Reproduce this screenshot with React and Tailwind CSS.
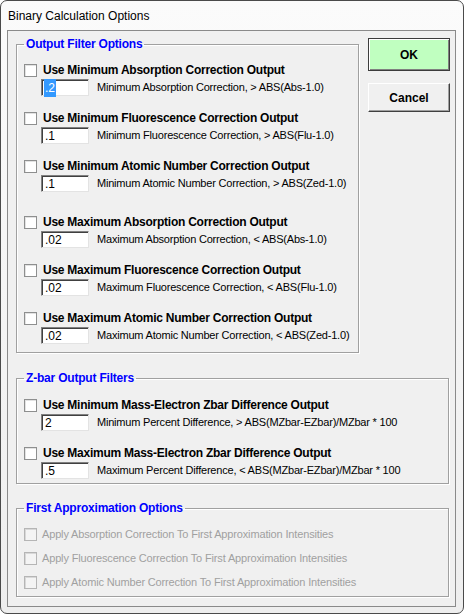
import React from "react";

const filters = [
  { label: "Use Minimum Absorption Correction Output", value: ".2", desc: "Minimum Absorption Correction, > ABS(Abs-1.0)", selected: true },
  { label: "Use Minimum Fluorescence Correction Output", value: ".1", desc: "Minimum Fluorescence Correction, > ABS(Flu-1.0)" },
  { label: "Use Minimum Atomic Number Correction Output", value: ".1", desc: "Minimum Atomic Number Correction, > ABS(Zed-1.0)" },
  { label: "Use Maximum Absorption Correction Output", value: ".02", desc: "Maximum Absorption Correction, < ABS(Abs-1.0)", gap: true },
  { label: "Use Maximum Fluorescence Correction Output", value: ".02", desc: "Maximum Fluorescence Correction, < ABS(Flu-1.0)" },
  { label: "Use Maximum Atomic Number Correction Output", value: ".02", desc: "Maximum Atomic Number Correction, < ABS(Zed-1.0)" },
];

const zbar = [
  { label: "Use Minimum Mass-Electron Zbar Difference Output", value: "2", desc: "Minimum Percent Difference, > ABS(MZbar-EZbar)/MZbar * 100" },
  { label: "Use Maximum Mass-Electron Zbar Difference Output", value: ".5", desc: "Maximum Percent Difference, < ABS(MZbar-EZbar)/MZbar * 100" },
];

const firstApprox = [
  "Apply Absorption Correction To First Approximation Intensities",
  "Apply Fluorescence Correction To First Approximation Intensities",
  "Apply Atomic Number Correction To First Approximation Intensities",
];

function Checkbox({ disabled }) {
  return (
    <span
      className={
        "block h-[13px] w-[13px] shrink-0 border " +
        (disabled
          ? "border-[#b5b5b5] bg-[#f4f4f4] shadow-[inset_1px_1px_0_#d8d8d8]"
          : "border-[#8e8f8f] bg-white shadow-[inset_1px_1px_0_#e2e2e2]")
      }
    />
  );
}

function Group({ title, className, children }) {
  return (
    <fieldset
      className={
        "min-w-0 shrink-0 border border-[#a0a0a0] px-[7px] shadow-[inset_1px_1px_0_#fff,1px_1px_0_#fff] " +
        className
      }
    >
      <legend className="px-[2px] text-[12px] font-bold leading-[16px] tracking-[-0.2px] text-[#0000ff]">
        {title}
      </legend>
      {children}
    </fieldset>
  );
}

function OptionRow({ item, first }) {
  return (
    <div className={first ? "" : item.gap ? "mt-[22px]" : "mt-[14px]"}>
      <div className="flex h-[16px] items-center">
        <Checkbox />
        <span className="ml-[6px] whitespace-nowrap text-[12px] font-bold tracking-[-0.25px] text-black">
          {item.label}
        </span>
      </div>
      <div className="mt-[1px] flex h-[17px] items-center pl-[17px]">
        <div className="flex h-[17px] w-[48px] shrink-0 items-center border-t border-l border-t-[#808080] border-l-[#808080] border-r border-b border-r-[#e3e3e3] border-b-[#e3e3e3] bg-white pl-[2px] shadow-[inset_1px_1px_0_#404040] text-[12px] text-black">
          {item.selected ? (
            <span className="bg-[#3399ff] px-[1px] text-white">{item.value}</span>
          ) : (
            <span className="px-[1px] pt-[1px]">{item.value}</span>
          )}
        </div>
        <span className="ml-[8px] whitespace-nowrap text-[11px] tracking-[-0.2px] text-black">{item.desc}</span>
      </div>
    </div>
  );
}

export default function App() {
  return (
    <div
      className="h-[614px] w-[464px] overflow-hidden rounded-[7px] border border-[#4a4a4a] bg-gradient-to-b from-[#fbfbfb] to-[#eeeeee]"
      style={{ fontFamily: '"Liberation Sans", Arial, sans-serif' }}
    >
      <div className="flex h-[29px] items-center pl-[7px] text-[12px] text-black">
        Binary Calculation Options
      </div>

      <div className="ml-[6px] h-[577px] w-[449px] border border-[#8a8a8a] bg-[#f0f0f0] px-[8px] pt-[5px]">
        <div className="flex items-start">
          <Group title="Output Filter Options" className="h-[317px] w-[343px] pb-[8px]">
            <div className="pt-[10px]">
              {filters.map((f, i) => (
                <OptionRow key={f.label} item={f} first={i === 0} />
              ))}
            </div>
          </Group>

          <div className="ml-[9px] flex flex-col pt-[2px]">
            <button className="flex h-[33px] w-[82px] items-center justify-center border border-[#3c3c3c] bg-[#c0ffc0] text-[12px] font-bold text-black shadow-[inset_1px_1px_0_#fff,inset_-1px_-1px_0_#808080]">
              OK
            </button>
            <button className="mt-[12px] flex h-[29px] w-[82px] items-center justify-center border border-t-white border-l-white border-r-[#404040] border-b-[#404040] bg-[#f0f0f0] text-[12px] font-bold text-black shadow-[inset_-1px_-1px_0_#a0a0a0]">
              Cancel
            </button>
          </div>
        </div>

        <Group title="Z-bar Output Filters" className="mt-[17px] h-[114px] w-[433px]">
          <div className="pt-[11px]">
            {zbar.map((f, i) => (
              <OptionRow key={f.label} item={f} first={i === 0} />
            ))}
          </div>
        </Group>

        <Group title="First Approximation Options" className="mt-[16px] h-[97px] w-[433px]">
          <div className="flex flex-col gap-[8px] pt-[10px]">
            {firstApprox.map((t) => (
              <div key={t} className="flex h-[16px] items-center">
                <Checkbox disabled />
                <span className="ml-[5px] whitespace-nowrap text-[11px] tracking-[-0.15px] text-[#a0a0a0]">{t}</span>
              </div>
            ))}
          </div>
        </Group>
      </div>
    </div>
  );
}
